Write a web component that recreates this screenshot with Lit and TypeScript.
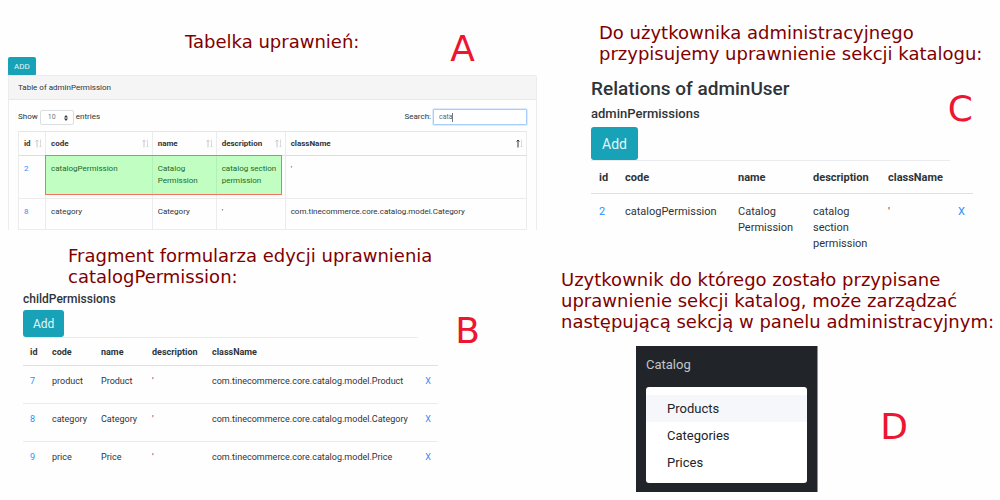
import { LitElement, html, css, svg, nothing } from "lit";
import { customElement, property } from "lit/decorators.js";

interface Permission {
  id: number;
  code: string;
  name: string;
  description: string;
  className: string;
}

const COLUMNS = ["id", "code", "name", "description", "className"] as const;

const CATALOG: Permission = {
  id: 2,
  code: "catalogPermission",
  name: "Catalog Permission",
  description: "catalog section permission",
  className: "'",
};

const model = (id: number, code: string, name: string): Permission => ({
  id,
  code,
  name,
  description: "'",
  className: `com.tinecommerce.core.catalog.model.${name}`,
});

const shared = css`
  * {
    box-sizing: border-box;
  }
  a {
    color: #2b8fff;
    text-decoration: none;
  }
  table {
    border-collapse: separate;
    border-spacing: 0;
    table-layout: fixed;
    width: 100%;
  }
  th,
  td {
    text-align: left;
  }
  th {
    font-weight: 700;
  }
  td {
    vertical-align: top;
  }
  button {
    display: block;
    border: 0;
    background: #17a2b8;
    color: #e4f5f7;
    font-family: inherit;
  }
`;

@customElement("permission-listing")
export class PermissionListing extends LitElement {
  static styles = [
    shared,
    css`
      :host {
        display: block;
        font-size: 8px;
        line-height: 12px;
      }
      .add {
        height: 19px;
        padding: 0 6px;
        border-radius: 2px;
        font-size: 8px;
      }
      .card {
        border: 1px solid #ececed;
        border-bottom: 0;
        border-radius: 2px 2px 0 0;
        margin-top: -1px;
      }
      .title {
        height: 24px;
        padding: 6px 9px;
        background: #f5f5f5;
        border-bottom: 1px solid #e8e8e9;
      }
      .body {
        padding: 9px 9px 0;
      }
      .tools {
        display: flex;
        justify-content: space-between;
        align-items: center;
        height: 16px;
        margin-bottom: 6px;
      }
      .tool {
        display: flex;
        align-items: center;
        gap: 2px;
      }
      .picker {
        position: relative;
        display: flex;
      }
      select {
        appearance: none;
        width: 34px;
        height: 15px;
        padding: 0 7px;
        border: 1px solid #dcdfe2;
        border-radius: 2px;
        background: #fff;
        color: #6f777e;
        font: 7px Roboto, sans-serif;
      }
      .updown {
        position: absolute;
        right: 6px;
        top: 5px;
        width: 4px;
        height: 6px;
      }
      .search {
        position: relative;
        display: flex;
      }
      input {
        width: 94px;
        height: 16px;
        padding: 0 5px;
        border: 1px solid #a8cffa;
        border-radius: 1px;
        box-shadow: 0 0 0 1px #dcebfd;
        outline: 0;
        color: #5f676e;
        font: 7px Roboto, sans-serif;
      }
      .caret {
        position: absolute;
        left: 19px;
        top: 4px;
        width: 1px;
        height: 9px;
        background: #777;
      }
      .frame {
        position: relative;
      }
      table {
        border-top: 1px solid #e4e6e8;
        border-left: 1px solid #ececee;
      }
      th,
      td {
        border-right: 1px solid #ececee;
        padding: 0 5px;
      }
      th {
        height: 24px;
        border-bottom: 1px solid #dadde1;
      }
      td {
        height: 43px;
        padding-top: 7px;
        border-bottom: 1px solid #ececee;
      }
      tr:last-child td {
        height: 31px;
      }
      .head {
        display: flex;
        justify-content: space-between;
        align-items: center;
        margin-right: -2px;
      }
      .sort {
        width: 7px;
        height: 9px;
      }
      .id {
        width: 27px;
      }
      .code {
        width: 21%;
      }
      .name {
        width: 64px;
      }
      .description {
        width: 69px;
      }
      .mark {
        position: absolute;
        left: 27px;
        top: 24px;
        width: calc(21% + 130px);
        height: 40px;
        border: 1px solid #f0745f;
        background: rgba(0, 255, 0, 0.24);
      }
    `,
  ];

  private rows = [CATALOG, model(8, "category", "Category")];

  private arrows(active: boolean) {
    return html`<svg class="sort" viewBox="0 0 7 9" fill="none" aria-hidden="true">
      ${svg`<path d="M2 8.500V1M.5 2.500L2 1L3.500 2.500" stroke=${active ? "#33383d" : "#c6c8ca"}></path>
      <path d="M5.500 .5V8M4.500 7L5.500 8L6.500 7" stroke="#cfd1d3" stroke-width=".8"></path>`}
    </svg>`;
  }

  render() {
    return html`
      <button class="add">ADD</button>
      <div class="card">
        <div class="title">Table of adminPermission</div>
        <div class="body">
          <div class="tools">
            <label class="tool">
              Show
              <span class="picker">
                <select>
                  <option>10</option>
                </select>
                <svg class="updown" viewBox="0 0 4 6" fill="#343a40" aria-hidden="true">
                  <path d="M2 0L4 2.500H0ZM2 6L0 3.500H4Z"></path>
                </svg>
              </span>
              entries
            </label>
            <label class="tool">
              Search:
              <span class="search">
                <input type="text" .value=${"cata"} />
                <span class="caret"></span>
              </span>
            </label>
          </div>
          <div class="frame">
            <table>
              <thead>
                <tr>
                  ${COLUMNS.map(
                    (c) => html`<th class=${c}>
                      <span class="head">${c}${this.arrows(c === "className")}</span>
                    </th>`
                  )}
                </tr>
              </thead>
              <tbody>
                ${this.rows.map(
                  (r) => html`<tr>
                    <td><a href="#${r.id}">${r.id}</a></td>
                    <td>${r.code}</td>
                    <td>${r.name}</td>
                    <td>${r.description}</td>
                    <td>${r.className}</td>
                  </tr>`
                )}
              </tbody>
            </table>
            <div class="mark"></div>
          </div>
        </div>
      </div>
    `;
  }
}

@customElement("relation-table")
export class RelationTable extends LitElement {
  @property({ attribute: false }) rows: Permission[] = [];
  @property({ reflect: true }) size: "small" | "large" = "small";

  static styles = [
    shared,
    css`
      :host {
        display: block;
        font-size: 9px;
        line-height: 14px;
      }
      :host([size="large"]) {
        font-size: 11px;
        line-height: 16px;
      }
      button {
        height: 27px;
        padding: 0 10px;
        border-radius: 3px;
        font-size: 12px;
      }
      :host([size="large"]) button {
        height: 33px;
        padding: 0 11px;
        font-size: 14px;
      }
      th,
      td {
        padding: 0 7px;
      }
      th {
        height: 29px;
        padding-top: 1px;
        border-top: 1px solid #e9ebed;
        border-bottom: 1px solid #dfe2e5;
      }
      .blank {
        border-top-color: transparent;
      }
      td {
        height: 38px;
        padding-top: 8px;
        border-bottom: 1px solid #e9ebed;
      }
      tr:last-child td {
        border-bottom: 0;
      }
      :host([size="large"]) th,
      :host([size="large"]) td {
        padding-left: 8px;
        padding-right: 0;
      }
      :host([size="large"]) th {
        height: 34px;
        padding-top: 2px;
      }
      :host([size="large"]) td {
        padding-top: 10px;
      }
      .id {
        width: 22px;
      }
      .code {
        width: 49px;
      }
      .name {
        width: 51px;
      }
      .description {
        width: 60px;
      }
      .blank {
        width: 20px;
      }
      :host([size="large"]) .id {
        width: 26px;
      }
      :host([size="large"]) .code {
        width: auto;
      }
      :host([size="large"]) .name,
      :host([size="large"]) .description {
        width: 75px;
      }
      :host([size="large"]) .className {
        width: 70px;
      }
      :host([size="large"]) .blank {
        width: 23px;
      }
    `,
  ];

  render() {
    return html`
      <button>Add</button>
      <table>
        <thead>
          <tr>
            ${COLUMNS.map((c) => html`<th class=${c}>${c}</th>`)}
            <th class="blank">${nothing}</th>
          </tr>
        </thead>
        <tbody>
          ${this.rows.map(
            (r) => html`<tr>
              <td><a href="#${r.id}">${r.id}</a></td>
              <td>${r.code}</td>
              <td>${r.name}</td>
              <td>${r.description}</td>
              <td>${r.className}</td>
              <td><a href="#remove-${r.id}">X</a></td>
            </tr>`
          )}
        </tbody>
      </table>
    `;
  }
}

@customElement("app-root")
export class AppRoot extends LitElement {
  static styles = css`
    * {
      box-sizing: border-box;
    }
    :host {
      display: grid;
      grid-template-columns: 55fr 45fr;
      background: #fefefe;
      color: #2f3439;
      font-family: Roboto, sans-serif;
      min-height: 100vh;
    }
    h2,
    h3,
    p,
    ul {
      margin: 0;
      padding: 0;
    }
    .caption {
      color: #800000;
      font: 18px/21px "DejaVu Sans", sans-serif;
      white-space: nowrap;
    }
    .letter {
      color: #ed1530;
      font: 36px/36px "DejaVu Sans", sans-serif;
    }
    .intro {
      display: flex;
      justify-content: space-between;
      padding: 31px 75px 0 185px;
      height: 57px;
    }
    .listing {
      padding: 0 13px 0 8px;
    }
    .edit {
      padding: 15px 0 0 68px;
    }
    h2 {
      font-size: 19px;
      line-height: 24px;
      font-weight: 500;
    }
    h3 {
      font-size: 12px;
      line-height: 18px;
      font-weight: 500;
    }
    .children {
      display: flex;
      gap: 17px;
      padding: 3px 70px 0 23px;
    }
    .children .fill {
      flex: 1;
    }
    .children h3 {
      margin-bottom: 2px;
    }
    .children .letter {
      margin-top: 23px;
    }
    .assign {
      padding: 22px 0 0 49px;
    }
    .user {
      padding: 13px 27px 0 41px;
    }
    .user h3 {
      font-size: 13px;
      line-height: 26px;
    }
    .top {
      display: flex;
      justify-content: space-between;
      align-items: flex-end;
    }
    .result {
      padding: 17px 0 0 11px;
    }
    .demo {
      display: flex;
      gap: 62px;
      padding: 14px 92px 0 86px;
    }
    .demo .letter {
      margin-top: 63px;
    }
    nav {
      flex: 1;
      padding: 10px 10px 9px;
      background: #212529;
      color: #c3c5c7;
      border-right: 1px solid #8e9092;
      font-size: 13px;
      line-height: 18px;
    }
    .menu {
      list-style: none;
      margin-top: 13px;
      padding: 8px 0 7px;
      border-radius: 3px;
      background: #fff;
    }
    .item {
      display: block;
      padding: 0 21px;
      line-height: 27px;
      color: #212529;
      text-decoration: none;
    }
    .item.active {
      background: #f6f7fa;
    }
  `;

  private children_ = [
    model(7, "product", "Product"),
    model(8, "category", "Category"),
    model(9, "price", "Price"),
  ];

  render() {
    return html`
      <main>
        <div class="intro">
          <p class="caption">Tabelka uprawnień:</p>
          <span class="letter">A</span>
        </div>
        <div class="listing"><permission-listing></permission-listing></div>
        <p class="caption edit">
          Fragment formularza edycji uprawnienia<br />catalogPermission:
        </p>
        <div class="children">
          <div class="fill">
            <h3>childPermissions</h3>
            <relation-table .rows=${this.children_}></relation-table>
          </div>
          <span class="letter">B</span>
        </div>
      </main>
      <aside>
        <p class="caption assign">
          Do użytkownika administracyjnego<br />przypisujemy uprawnienie sekcji katalogu:
        </p>
        <div class="user">
          <div class="top">
            <div>
              <h2>Relations of adminUser</h2>
              <h3>adminPermissions</h3>
            </div>
            <span class="letter">C</span>
          </div>
          <relation-table size="large" .rows=${[CATALOG]}></relation-table>
        </div>
        <p class="caption result">
          Uzytkownik do którego zostało przypisane<br />uprawnienie sekcji katalog, może
          zarządzać<br />następującą sekcją w panelu administracyjnym:
        </p>
        <div class="demo">
          <nav>
            Catalog
            <ul class="menu">
              ${["Products", "Categories", "Prices"].map(
                (t, i) => html`<li>
                  <a class="item ${i === 0 ? "active" : ""}" href="#${t.toLowerCase()}">${t}</a>
                </li>`
              )}
            </ul>
          </nav>
          <span class="letter">D</span>
        </div>
      </aside>
    `;
  }
}
